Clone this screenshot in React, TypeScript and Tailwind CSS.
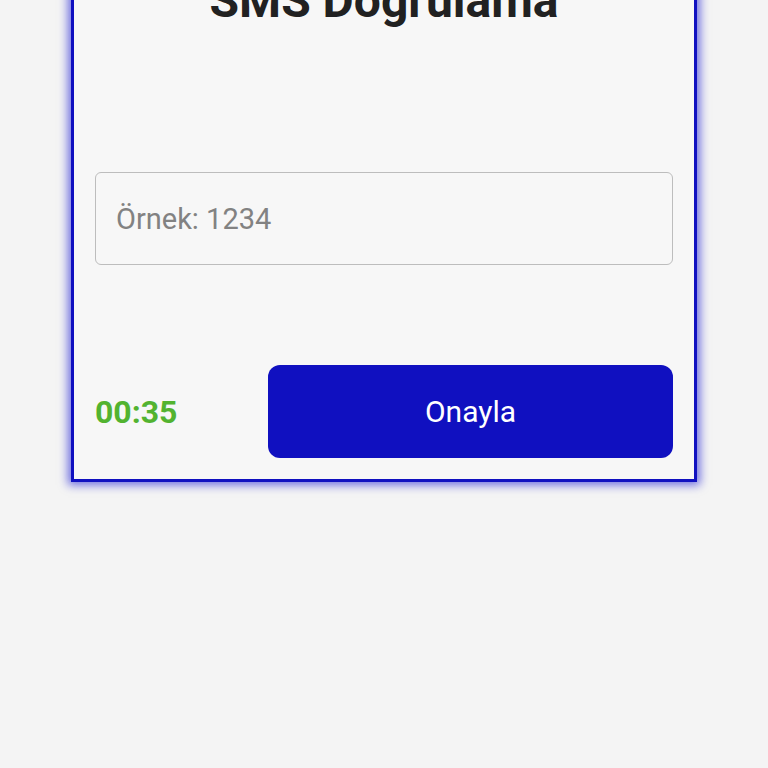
export default function App() {
  return (
    <div className="min-h-[768px] w-full overflow-hidden bg-[#f4f4f4] font-['Roboto',sans-serif]">
      <div className="mx-auto -mt-[40px] w-[626px] border-[3px] border-[#1010c0] bg-[#f7f7f7] px-[21px] pb-[21px] pt-[10px] shadow-[0_0_9px_3px_rgba(16,16,210,0.6)]">
        <h1 className="text-center text-[48px] font-bold leading-[56px] text-[#212121]">SMS Doğrulama</h1>

        <input
          type="text"
          placeholder="Örnek: 1234"
          className="mt-[143px] block h-[93px] w-full rounded-[6px] border border-[#bdbdbd] bg-transparent px-[20px] text-[29px] text-[#212121] placeholder-[#828282] outline-none"
        />

        <div className="mt-[100px] flex items-center justify-between">
          <span className="text-[32px] font-bold text-[#52b330]">00:35</span>
          <button
            type="button"
            className="h-[93px] w-[405px] rounded-[12px] bg-[#1010c0] text-[30px] text-white"
          >
            Onayla
          </button>
        </div>
      </div>
    </div>
  )
}
